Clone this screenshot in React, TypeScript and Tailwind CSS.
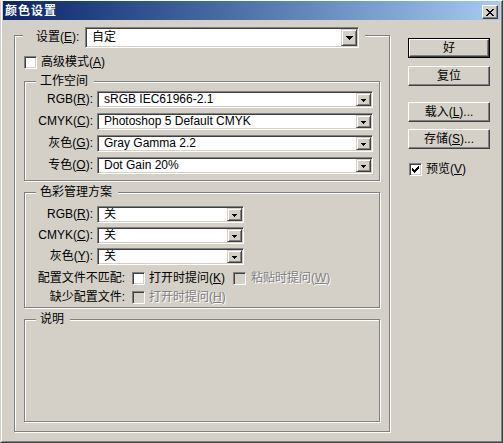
import type { ReactNode } from 'react';

const sunken =
  'border border-[#808080] border-r-white border-b-white shadow-[inset_1px_1px_0_#404040,inset_-1px_-1px_0_#d4d0c8]';
const etched = 'border border-[#808080] shadow-[inset_1px_1px_0_#fff,1px_1px_0_#fff]';
const raised =
  'border border-white border-r-[#404040] border-b-[#404040] shadow-[inset_-1px_-1px_0_#808080]';
const arrowBtn =
  'border border-[#d4d0c8] border-r-[#404040] border-b-[#404040] shadow-[inset_1px_1px_0_#fff,inset_-1px_-1px_0_#808080] bg-[#d4d0c8] flex items-center justify-center';
const disabledText = 'text-[#808080] [text-shadow:1px_1px_0_#fff]';

function Combo({ value, size, big }: { value: string; size: string; big?: boolean }) {
  return (
    <div className={`${size} ${sunken} bg-white p-[1px] flex`}>
      <div className="flex-1 flex items-center pl-[5px] leading-[13px] whitespace-nowrap overflow-hidden">
        {value}
      </div>
      <div className={`${big ? 'w-[16px]' : 'w-[15px]'} ${arrowBtn}`}>
        {big ? (
          <svg width="7" height="4" shapeRendering="crispEdges">
            <path d="M0 0h7v1H0zM1 1h5v1H1zM2 2h3v1H2zM3 3h1v1H3z" fill="#000" />
          </svg>
        ) : (
          <svg width="5" height="3" shapeRendering="crispEdges" className="mt-[2px]">
            <path d="M0 0h5v1H0zM1 1h3v1H1zM2 2h1v1H2z" fill="#000" />
          </svg>
        )}
      </div>
    </div>
  );
}

function Check({ checked, disabled }: { checked?: boolean; disabled?: boolean }) {
  return (
    <div
      className={`w-[13px] h-[13px] shrink-0 ${sunken} ${disabled ? 'bg-[#d4d0c8]' : 'bg-white'} flex items-center justify-center`}
    >
      {checked && (
        <svg width="7" height="7" shapeRendering="crispEdges">
          <path
            d="M0 2h1v3H0zM1 3h1v3H1zM2 4h1v3H2zM3 3h1v3H3zM4 2h1v3H4zM5 1h1v3H5zM6 0h1v3H6z"
            fill="#000"
          />
        </svg>
      )}
    </div>
  );
}

function Group({ title, className, children }: { title: string; className: string; children?: ReactNode }) {
  return (
    <div className={`${etched} ${className} flex flex-col`}>
      <div className="-mt-[7px] ml-[11px] w-fit pl-[4px] pr-[6px] h-[13px] leading-[13px] bg-[#d4d0c8]">{title}</div>
      {children}
    </div>
  );
}

function Row({ label, children, lw }: { label: ReactNode; children: ReactNode; lw: string }) {
  return (
    <div className="flex items-center">
      <div className={`${lw} text-right leading-[13px] whitespace-nowrap`}>{label}</div>
      {children}
    </div>
  );
}

function Button({ children, isDefault, className }: { children: ReactNode; isDefault?: boolean; className: string }) {
  return (
    <div
      className={`w-[82px] h-[20px] ${className} ${
        isDefault ? 'border border-black' : ''
      } flex`}
    >
      <div className={`flex-1 ${raised} flex items-center justify-center leading-[13px] whitespace-nowrap`}>
        {children}
      </div>
    </div>
  );
}

export default function App() {
  return (
    <div className="w-[503px] h-[443px] bg-[#d4d0c8] text-[12px] text-black font-['Liberation_Sans','Noto_Sans_CJK_SC',sans-serif] border-l border-t border-l-[#d4d0c8] border-t-white border-r border-b border-r-[#404040] border-b-[#404040] flex flex-col">
      <div className="flex-1 flex flex-col border-l border-l-white border-r border-b border-r-[#808080] border-b-[#808080] px-[1px] pb-[1px]">
        {/* title bar */}
        <div className="h-[19px] flex items-start bg-gradient-to-r from-[#0a246a] to-[#a6caf0]">
          <div className="flex-1 pl-[2px] pt-[4px] text-white font-bold tracking-[1px] leading-[13px]">颜色设置</div>
          <div className={`mt-[4px] mr-[2px] w-[16px] h-[14px] bg-[#d4d0c8] ${raised} flex items-center justify-center`}>
            <svg width="8" height="7" shapeRendering="crispEdges">
              <path
                d="M0 0h2v1H0zM6 0h2v1H6zM1 1h2v1H1zM5 1h2v1H5zM2 2h4v1H2zM3 3h2v1H3zM2 4h4v1H2zM1 5h2v1H1zM5 5h2v1H5zM0 6h2v1H0zM6 6h2v1H6z"
                fill="#000"
              />
            </svg>
          </div>
        </div>

        {/* body */}
        <div className="flex pl-[11px] pt-[15px]">
          <div className={`w-[376px] h-[397px] ${etched} flex flex-col`}>
            <div className="-mt-[9px] ml-[8px] w-fit h-[21px] pl-[13px] pr-[6px] bg-[#d4d0c8] flex items-center">
              <div className="w-[45px] mr-[4px] leading-[13px] whitespace-nowrap">
                设置(<u>E</u>):
              </div>
              <Combo value="自定" size="w-[274px] h-[21px]" big />
            </div>

            <div className="mt-[8px] ml-[9px] flex items-center gap-[4px] h-[13px]">
              <Check />
              <span className="leading-[13px]">
                高级模式(<u>A</u>)
              </span>
            </div>

            <Group title="工作空间" className="mt-[12px] ml-[9px] w-[356px] h-[100px]">
              <div className="mt-[3px] flex flex-col gap-[5px]">
                <Row lw="w-[68px]" label={<>RGB(<u>R</u>):</>}>
                  <div className="ml-[4px]">
                    <Combo value="sRGB IEC61966-2.1" size="w-[276px] h-[17px]" />
                  </div>
                </Row>
                <Row lw="w-[68px]" label={<>CMYK(<u>C</u>):</>}>
                  <div className="ml-[4px]">
                    <Combo value="Photoshop 5 Default CMYK" size="w-[276px] h-[17px]" />
                  </div>
                </Row>
                <Row lw="w-[68px]" label={<>灰色(<u>G</u>):</>}>
                  <div className="ml-[4px]">
                    <Combo value="Gray Gamma 2.2" size="w-[276px] h-[17px]" />
                  </div>
                </Row>
                <Row lw="w-[68px]" label={<>专色(<u>O</u>):</>}>
                  <div className="ml-[4px]">
                    <Combo value="Dot Gain 20%" size="w-[276px] h-[17px]" />
                  </div>
                </Row>
              </div>
            </Group>

            <Group title="色彩管理方案" className="mt-[11px] ml-[9px] w-[356px] h-[116px]">
              <div className="mt-[7px] flex flex-col gap-[4px]">
                <Row lw="w-[68px]" label={<>RGB(<u>R</u>):</>}>
                  <div className="ml-[4px]">
                    <Combo value="关" size="w-[147px] h-[17px]" />
                  </div>
                </Row>
                <Row lw="w-[68px]" label={<>CMYK(<u>C</u>):</>}>
                  <div className="ml-[4px]">
                    <Combo value="关" size="w-[147px] h-[17px]" />
                  </div>
                </Row>
                <Row lw="w-[68px]" label={<>灰色(<u>Y</u>):</>}>
                  <div className="ml-[4px]">
                    <Combo value="关" size="w-[147px] h-[17px]" />
                  </div>
                </Row>
              </div>
              <div className="mt-[7px] flex flex-col gap-[6px]">
                <Row lw="w-[100px]" label="配置文件不匹配:">
                  <div className="ml-[7px] w-[101px] flex items-center gap-[4px]">
                    <Check />
                    <span className="leading-[13px] whitespace-nowrap">
                      打开时提问(<u>K</u>)
                    </span>
                  </div>
                  <div className="flex items-center gap-[5px]">
                    <Check disabled />
                    <span className={`leading-[13px] whitespace-nowrap ${disabledText}`}>
                      粘贴时提问(<u>W</u>)
                    </span>
                  </div>
                </Row>
                <Row lw="w-[100px]" label="缺少配置文件:">
                  <div className="ml-[7px] flex items-center gap-[4px]">
                    <Check disabled />
                    <span className={`leading-[13px] whitespace-nowrap ${disabledText}`}>
                      打开时提问(<u>H</u>)
                    </span>
                  </div>
                </Row>
              </div>
            </Group>

            <Group title="说明" className="mt-[11px] ml-[9px] w-[356px] h-[103px]" />
          </div>

          {/* buttons */}
          <div className="ml-[18px] mt-[3px] flex flex-col">
            <Button isDefault className="">
              好
            </Button>
            <Button className="mt-[8px]">复位</Button>
            <Button className="mt-[16px]">
              载入(<u>L</u>)...
            </Button>
            <Button className="mt-[7px]">
              存储(<u>S</u>)...
            </Button>
            <div className="mt-[14px] ml-[1px] flex items-center gap-[4px]">
              <Check checked />
              <span className="leading-[13px]">
                预览(<u>V</u>)
              </span>
            </div>
          </div>
        </div>
      </div>
    </div>
  );
}
